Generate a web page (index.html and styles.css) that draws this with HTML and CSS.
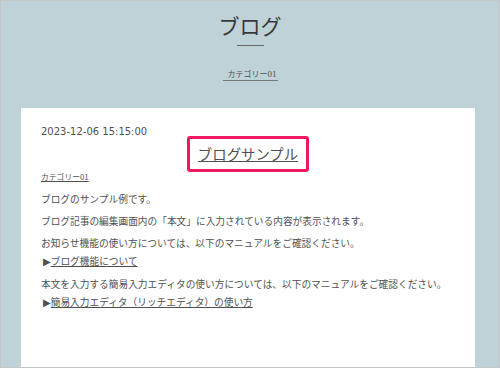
FILE: index.html
```html
<!DOCTYPE html>
<html lang="ja">
<head>
<meta charset="UTF-8">
<title>ブログ</title>
<link rel="stylesheet" href="styles.css">
</head>
<body>
<div class="page">
	<header class="blog-head">
		<h1 class="blog-title">ブログ</h1>
		<a class="head-cat" href="#">カテゴリー<span class="num">01</span></a>
	</header>
	<main class="card">
		<div class="date">2023-12-06 15:15:00</div>
		<h2 class="post-title"><a href="#">ブログサンプル</a></h2>
		<a class="post-cat" href="#">カテゴリー01</a>
		<div class="post-body">
			<p>ブログのサンプル例です。</p>
			<p>ブログ記事の編集画面内の「本文」に入力されている内容が表示されます。</p>
			<p>お知らせ機能の使い方については、以下のマニュアルをご確認ください。<br><span class="arrow">▶</span><a href="#">ブログ機能について</a></p>
			<p>本文を入力する簡易入力エディタの使い方については、以下のマニュアルをご確認ください。<br><span class="arrow">▶</span><a href="#">簡易入力エディタ（リッチエディタ）の使い方</a></p>
		</div>
	</main>
</div>
</body>
</html>
```
FILE: styles.css
```css
html, body {
	margin: 0;
	padding: 0;
}
body {
	font-family: "Noto Sans CJK JP", "Noto Sans", sans-serif;
	color: #505050;
}
a {
	color: #505050;
}
.page {
	box-sizing: border-box;
	width: 500px;
	height: 368px;
	overflow: hidden;
	border: 1px solid #c6c6c6;
	background-color: #bfd2d8;
}
.blog-head {
	text-align: center;
}
.blog-title {
	margin: 0;
	padding-top: 11px;
	font-size: 21px;
	font-weight: normal;
	line-height: 26px;
	color: #3a3a3a;
}
.blog-title::after {
	content: "";
	display: block;
	width: 27px;
	height: 1px;
	margin: 7px auto 0;
	background-color: #666;
}
.head-cat {
	display: inline-block;
	margin-top: 22px;
	padding: 0 1px 0 5px;
	font-size: 8px;
	line-height: 12px;
	text-decoration: none;
	border-bottom: 1px solid #777;
}
.head-cat .num {
	font-family: "Liberation Serif", serif;
	font-size: 9px;
}
.card {
	margin: 26px 24px 0 20px;
	padding: 18px 20px 40px;
	background-color: #fff;
	height: 400px;
}
.date {
	font-family: "DejaVu Sans", sans-serif;
	font-size: 10px;
	line-height: 12px;
}
.post-title {
	margin: -2px 0 0;
	text-align: center;
	font-weight: normal;
	line-height: 0;
}
.post-title a {
	display: inline-block;
	padding: 4px 8px;
	border: 3px solid #f0195f;
	border-radius: 3px;
	font-size: 14.4px;
	line-height: 22px;
}
.post-cat {
	display: block;
	font-size: 7.8px;
	line-height: 10px;
}
.post-body {
	margin-top: 8px;
	font-size: 9.7px;
	line-height: 18px;
}
.post-body p {
	margin: 0 0 4px;
}
.arrow {
	font-family: "DejaVu Sans", sans-serif;
	font-size: 10px;
	margin-left: 2px;
}
```
